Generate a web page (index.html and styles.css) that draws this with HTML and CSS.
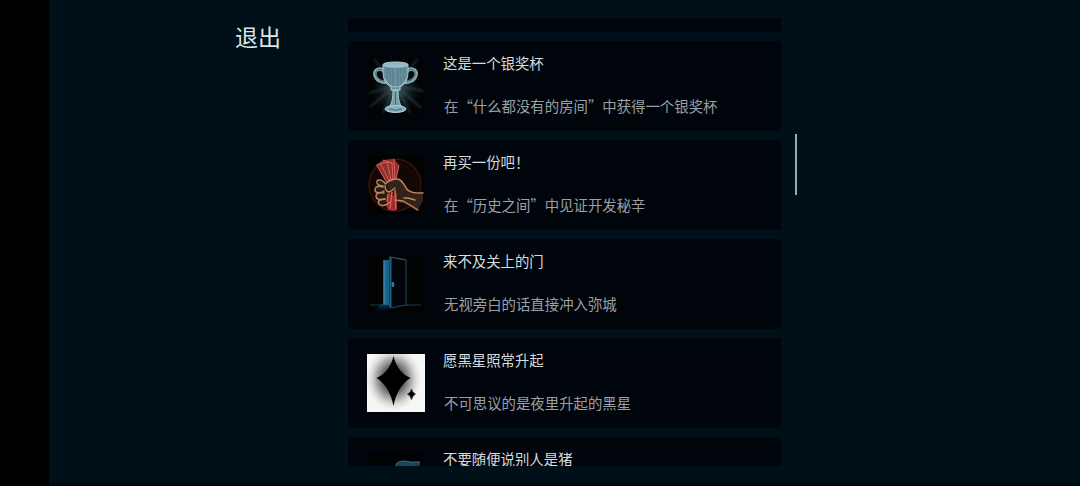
FILE: index.html
```html
<!DOCTYPE html>
<html lang="zh-CN">
<head>
  <meta charset="UTF-8" />
  <meta name="viewport" content="width=device-width, initial-scale=1.0" />
  <title>成就</title>
  <link rel="stylesheet" href="styles.css">
</head>
<body>
  <div class="screen">
    <nav class="sidebar">
      <button class="exit-btn" type="button">退出</button>
    </nav>
    <main class="achievement-list">
      <div class="card"></div>

      <div class="card">
        <svg class="card-icon" viewBox="0 0 58 58">
          <defs>
            <radialGradient id="cupGlow">
              <stop offset="0" stop-color="#55757c" stop-opacity="0.85" />
              <stop offset="1" stop-color="#1b2a2c" stop-opacity="0" />
            </radialGradient>
            <filter id="rayBlur"><feGaussianBlur stdDeviation="0.9" /></filter>
          </defs>
          <rect width="58" height="58" fill="#010304" />
          <circle cx="29" cy="32" r="25" fill="url(#cupGlow)" />
          <path d="M29 28 7 2M29 28 51 2M29 28 3 50M29 28 54 51M29 28 56 34M29 28 2 36M29 28 16 56M29 28 43 56" stroke="#3b5358" stroke-width="1.8" opacity="0.55" filter="url(#rayBlur)" />
          <g fill="none" stroke="#86a8b2" stroke-width="3.6">
            <path d="M18 14c-6-4-11-1-10 4 1 5 6 8 13 7" />
            <path d="M39 14c6-4 11-1 10 4-1 5-6 8-13 7" />
          </g>
          <g fill="none" stroke="#3d5c66" stroke-width="1">
            <path d="M17 14c-5-3-9-1-8 4 1 4 5 7 11 6M40 14c5-3 9-1 8 4-1 4-5 7-11 6" />
          </g>
          <path d="M16 8c0 9-1 17 8 22v3h9v-3c9-5 8-13 8-22z" fill="#68919d" stroke="#a6cbd6" />
          <ellipse cx="28.500" cy="7.500" rx="12.500" ry="2.500" fill="#93b7c1" stroke="#b0d0d8" />
          <path d="M20 11v14M23 11v18M26 11v19M31 11v19M34 11v18M37 11v14" stroke="#3f6570" stroke-width="0.7" opacity="0.7" />
          <path d="M18 22c3 6 7 8 10.500 8s8-2 11-8" fill="none" stroke="#a2c8d3" />
          <path d="M26 33h5c0 8 1 14 5 18H21c4-4 5-10 5-18z" fill="#759ea9" stroke="#a9ccd6" />
          <path d="M28.500 35v13" stroke="#496d77" />
          <ellipse cx="28.500" cy="52" rx="10.500" ry="3.500" fill="#87aeb9" stroke="#b1d2da" />
          <path d="M22 52q6.500 2.500 13 0" fill="none" stroke="#456872" />
        </svg>
        <div class="card-text">
          <h2>这是一个银奖杯</h2>
          <p>在“什么都没有的房间”中获得一个银奖杯</p>
        </div>
      </div>

      <div class="card">
        <svg class="card-icon" viewBox="0 0 58 58">
          <rect width="58" height="58" fill="#020203" />
          <circle cx="28" cy="29" r="26" fill="#140604" stroke="#35130b" stroke-width="1.5" />
          <circle cx="28" cy="29" r="22" fill="none" stroke="#210907" />
          <!-- banknotes -->
          <path d="M9.500 9 16 4l11-1 5 6-3 14 2 12-2 19h-8l-4-9 3-17z" fill="#93302f" />
          <path d="M9.500 9 20 6l7 2M9.500 9 19 25M13 7l9 17M16 4l9 3 1 17M20 6l4 18M27 3l1 21M32 9l-3 14" fill="none" stroke="#d0605b" stroke-width="1" />
          <!-- fist and wrist -->
          <path d="M18 28l12-5 5 2 9 11 12 1v8l-6 10-12-7-7-2-1-9-5 3-2-4-4 1z" fill="#33221a" />
          <path d="M12 24l6 2 4 6-2 16-7 1-4-6 1-7-2-6z" fill="#2b1a12" />
          <g fill="none" stroke="#bd8a66" stroke-width="1.400" stroke-linejoin="round" stroke-linecap="round">
            <path d="M18 28c5-5 9-5 12-5 4 0 7 5 9 9 3 5 9 5 17 5" />
            <path d="M18 27c-3-3-7-4-8-2-1 3 2 5 6 5" />
            <path d="M16 31c-5-2-8 0-8 3 0 3 5 4 9 1" />
            <path d="M17 37c-5-1-8 0-8 3 0 4 5 4 9 3" />
            <path d="M18 43c-5 0-8 2-6 5 3 3 8 1 11-2" />
            <path d="M18 30c0 5 3 7 6 5l4-3" />
            <path d="M28 44l8 1 7 4 8 5" />
            <path d="M37 42l4 0 7 2" />
          </g>
          <path d="M25 36l-2 17M28 34l1 19M21 38l-1 8" stroke="#ec574b" stroke-width="1.500" />
          <path d="M21 51l4 3 5-1" fill="none" stroke="#c4362e" stroke-width="1.500" />
        </svg>
        <div class="card-text">
          <h2>再买一份吧！</h2>
          <p>在“历史之间”中见证开发秘辛</p>
        </div>
      </div>

      <div class="card">
        <svg class="card-icon" viewBox="0 0 58 58">
          <defs>
            <linearGradient id="doorShade" x1="0" y1="0" x2="0" y2="1">
              <stop offset="0" stop-color="#0c4969" stop-opacity="0.8" />
              <stop offset="1" stop-color="#06202f" stop-opacity="0" />
            </linearGradient>
          </defs>
          <rect width="58" height="58" fill="#010204" />
          <path d="M14 49h11l-6 9H6z" fill="url(#doorShade)" />
          <path d="M3 50h15M38 50h16" stroke="#143c50" />
          <path d="M16 5h6v45h-6z" fill="#1a6384" />
          <path d="M17.500 6v43" stroke="#2d7fa3" stroke-width="1.500" />
          <path d="M23 2l16 3v45l-16 3z" fill="#020509" stroke="#17445b" stroke-width="1.200" />
          <path d="M23.500 2v50" stroke="#20607f" stroke-width="2" />
          <path d="M24 2l15 3" stroke="#3e474c" />
          <path d="M26 27v5M24.500 29.500h3" stroke="#38718c" stroke-width="2" />
        </svg>
        <div class="card-text">
          <h2>来不及关上的门</h2>
          <p>无视旁白的话直接冲入弥城</p>
        </div>
      </div>

      <div class="card">
        <svg class="card-icon" viewBox="0 0 58 58">
          <defs>
            <radialGradient id="starGlow">
              <stop offset="0.2" stop-color="#000" stop-opacity="0.85" />
              <stop offset="0.6" stop-color="#000" stop-opacity="0.36" />
              <stop offset="0.8" stop-color="#000" stop-opacity="0.12" />
              <stop offset="1" stop-color="#000" stop-opacity="0" />
            </radialGradient>
          </defs>
          <rect width="58" height="58" fill="#f6f6f6" />
          <ellipse cx="26.500" cy="25" rx="27" ry="31" fill="url(#starGlow)" />
          <path d="M26.500 2C28.500 11 34 20 43.500 24C35 29 29 39 26.500 52C24 39 18 29 9.500 24C19 20 24.500 11 26.500 2z" fill="#000" />
          <path d="M44.500 35q1 4 4 5-3 1.500-4 5.500-1-4-4-5.500 3-1 4-5z" fill="#000" stroke="#333" stroke-width="0.8" />
        </svg>
        <div class="card-text">
          <h2>愿黑星照常升起</h2>
          <p>不可思议的是夜里升起的黑星</p>
        </div>
      </div>

      <div class="card">
        <svg class="card-icon" viewBox="0 0 58 58">
          <rect width="58" height="58" fill="#010203" />
          <path d="M29 14c0-4 3-6 7-6 5 0 7 2 11 1h6l-2 20H29z" fill="#194457" />
          <path d="M29 14c0-4 3-6 7-6 5 0 7 2 11 1h6" fill="none" stroke="#347088" stroke-width="1.200" />
        </svg>
        <div class="card-text">
          <h2>不要随便说别人是猪</h2>
        </div>
      </div>
    </main>
    <div class="scroll-track">
      <div class="scroll-thumb"></div>
    </div>
  </div>
</body>
</html>
```
FILE: styles.css
```css
* { box-sizing: border-box; }
body {
  margin: 0;
  background: #000;
  font-family: "Noto Sans CJK SC", sans-serif;
}
.screen {
  display: flex;
  height: 486px;
  margin-left: 49px;
  background: #001018;
  border-bottom: 3px solid #000b13;
  overflow: hidden;
}
.sidebar { width: 299px; padding: 18px 0 0 186px; }
.exit-btn {
  display: block;
  padding: 0; border: none; background: none;
  font-family: inherit; font-size: 23px; line-height: 36px;
  color: #dce5e8; cursor: pointer;
}
.achievement-list {
  display: flex; flex-direction: column; gap: 9px;
  width: 433px; height: 448px; margin-top: 18px;
  overflow: hidden;
}
.card {
  display: flex; flex: none; gap: 18px;
  height: 90px; padding: 16px 19px;
  background: #00050b;
  border-radius: 2px;
}
/* first card is mostly scrolled out of view */
.card:first-child { height: 14px; padding: 0; border-radius: 0 0 2px 2px; }
.card-icon { width: 58px; height: 58px; flex: none; }
.card-text { white-space: nowrap; }
.card-text h2, .card-text p {
  margin: 0;
  font-size: 14.4px; font-weight: 400; line-height: 22px;
}
.card-text h2 { margin-top: -5px; color: #d6dadd; }
.card-text p { margin: 21px 0 0 1px; color: #9ba0a4; }
.scroll-track { padding: 134px 0 0 14px; }
.scroll-thumb { width: 2px; height: 61px; background: #9ea8ad; }
```
